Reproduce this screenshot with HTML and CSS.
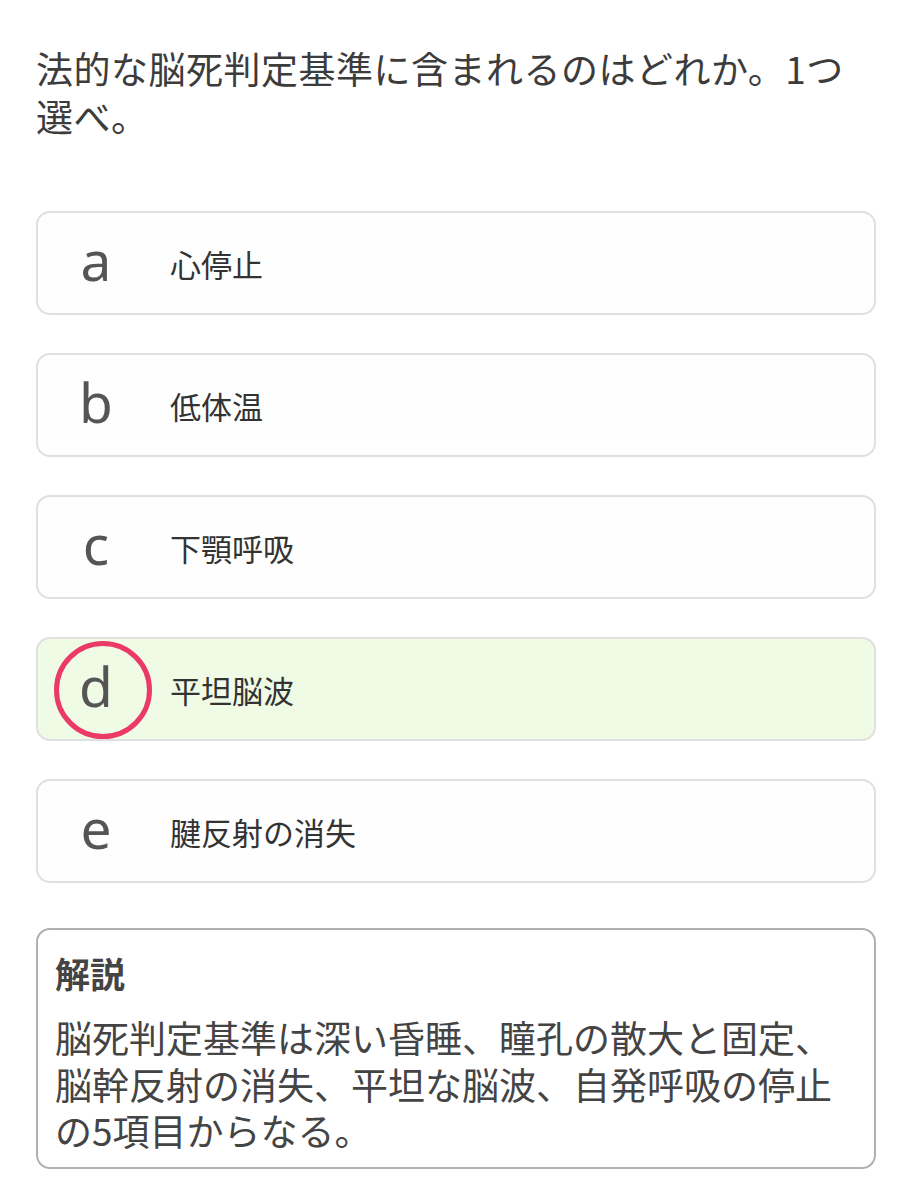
FILE: index.html
```html
<!DOCTYPE html>
<html lang="ja">
<head>
<meta charset="utf-8">
<title>問題</title>
<link rel="stylesheet" href="styles.css">
</head>
<body>
<main class="page">
  <h1 class="question">法的な脳死判定基準に含まれるのはどれか。1つ選べ。</h1>
  <ul class="options">
    <li class="option"><span class="letter">a</span><span class="label">心停止</span></li>
    <li class="option"><span class="letter">b</span><span class="label">低体温</span></li>
    <li class="option"><span class="letter">c</span><span class="label">下顎呼吸</span></li>
    <li class="option option-correct"><span class="letter letter-circled">d</span><span class="label">平坦脳波</span></li>
    <li class="option"><span class="letter">e</span><span class="label">腱反射の消失</span></li>
  </ul>
  <section class="explain">
    <h2 class="explain-title">解説</h2>
    <p class="explain-body">脳死判定基準は深い昏睡、瞳孔の散大と固定、脳幹反射の消失、平坦な脳波、自発呼吸の停止の5項目からなる。</p>
  </section>
</main>
</body>
</html>
```

FILE: styles.css
```css
* { box-sizing: border-box; }
html, body { margin: 0; padding: 0; background: #ffffff; }
body {
  font-family: "Noto Sans CJK JP", "Noto Sans", sans-serif;
  color: #3a3a3a;
}
.page {
  padding: 44px 36px 0 36px;
}
.question {
  margin: 0;
  padding-right: 12px;
  font-size: 37px;
  letter-spacing: 0.5px;
  line-height: 48px;
  font-weight: 400;
  color: #3c3c3c;
}
.options {
  list-style: none;
  margin: 71px 0 0 0;
  padding: 0;
  display: flex;
  flex-direction: column;
  gap: 38px;
}
.option {
  height: 104px;
  display: flex;
  align-items: center;
  border: 2px solid #e0e0e0;
  border-radius: 14px;
  background: #fefefe;
  padding-left: 16px;
}
.option-correct {
  background: #effbe5;
}
.letter {
  position: relative;
  width: 84px;
  text-align: center;
  font-family: "Noto Sans", sans-serif;
  font-size: 55px;
  line-height: 1;
  color: #555555;
  padding-bottom: 8px;
}
.letter-circled::after {
  content: "";
  position: absolute;
  left: 50%;
  top: 50%;
  width: 88px;
  height: 88px;
  margin-left: -42px;
  margin-top: -48px;
  border: 5px solid #ec3a67;
  border-radius: 50%;
}
.label {
  margin-left: 32px;
  font-size: 31px;
  color: #333333;
}
.explain {
  margin-top: 45px;
  border: 2px solid #b0b0b0;
  border-radius: 14px;
  padding: 20px 18px 13px 17px;
  color: #444444;
}
.explain-title {
  margin: 0 0 19px 0;
  font-size: 35px;
  line-height: 45px;
  font-weight: 700;
}
.explain-body {
  margin: 0;
  font-size: 37px;
  line-height: 46.5px;
}
```
